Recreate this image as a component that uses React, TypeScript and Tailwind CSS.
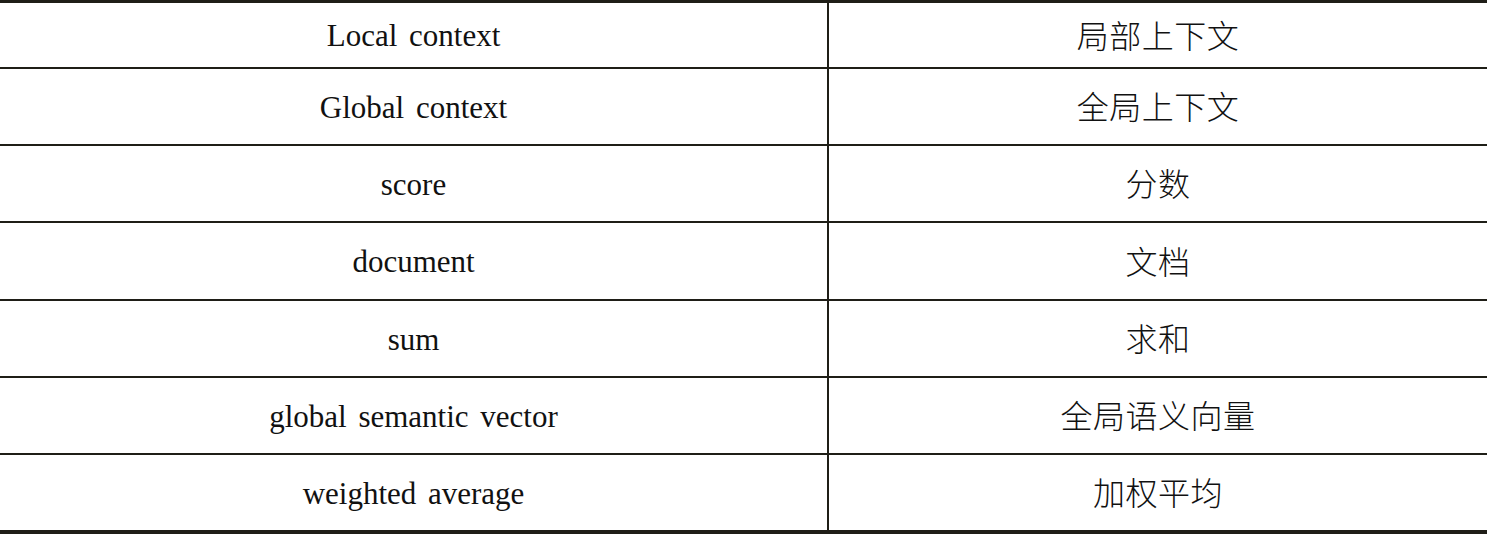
import React from "react";

const rows: [string, string][] = [
  ["Local context", "局部上下文"],
  ["Global context", "全局上下文"],
  ["score", "分数"],
  ["document", "文档"],
  ["sum", "求和"],
  ["global semantic vector", "全局语义向量"],
  ["weighted average", "加权平均"],
];

const heights = ["h-[66px]", "h-[77px]", "h-[77px]", "h-[78px]", "h-[77px]", "h-[77px]", "h-[75px]"];

export default function App() {
  return (
    <div className="w-[1487px] h-[534px] bg-white overflow-hidden">
      <div className="border-t-[3px] border-b-4 border-[#1f1e17] flex flex-col">
        {rows.map(([en, zh], i) => (
          <div
            key={i}
            className={`flex ${heights[i]} ${i < rows.length - 1 ? "border-b-2 border-[#1f1e17]" : ""}`}
          >
            <div
              className="w-[829px] shrink-0 border-r-2 border-[#1f1e17] flex items-center justify-center pt-[3px] text-[31px] text-[#111] [word-spacing:4px]"
              style={{ fontFamily: '"Liberation Serif", "Times New Roman", serif' }}
            >
              {en}
            </div>
            <div
              className="flex-1 flex items-center justify-center pb-[3px] text-[32px] text-[#111] tracking-[0.5px]"
              style={{ fontFamily: '"Noto Sans CJK SC", "Noto Sans", sans-serif', fontWeight: 300 }}
            >
              {zh}
            </div>
          </div>
        ))}
      </div>
    </div>
  );
}
